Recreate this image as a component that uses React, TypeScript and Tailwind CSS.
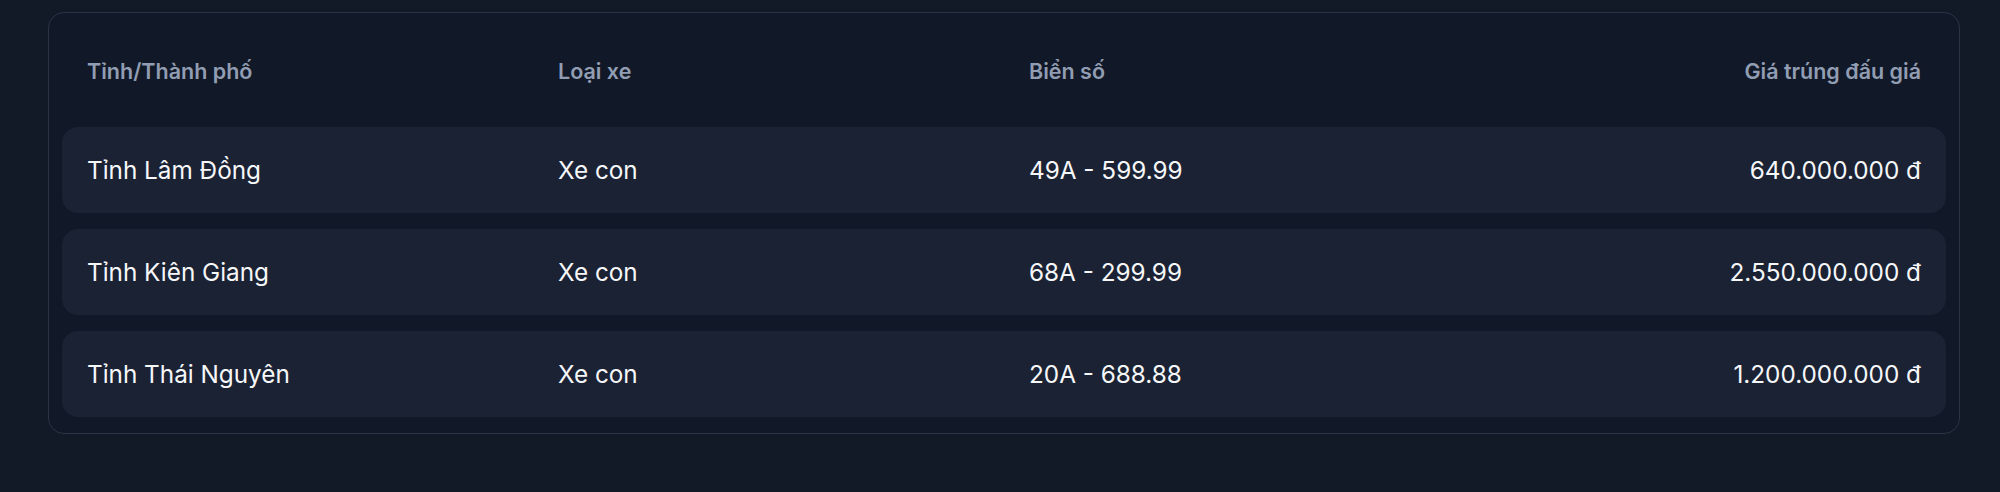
import React from "react";

interface IAuctionRow {
  province: string;
  vehicleType: string;
  plate: string;
  price: string;
}

const ROWS: IAuctionRow[] = [
  {province: "Tỉnh Lâm Đồng", vehicleType: "Xe con", plate: "49A - 599.99", price: "640.000.000 đ"},
  {province: "Tỉnh Kiên Giang", vehicleType: "Xe con", plate: "68A - 299.99", price: "2.550.000.000 đ"},
  {province: "Tỉnh Thái Nguyên", vehicleType: "Xe con", plate: "20A - 688.88", price: "1.200.000.000 đ"},
];

const HEADERS = ["Tỉnh/Thành phố", "Loại xe", "Biển số", "Giá trúng đấu giá"];

function App() {
  return (
    <div className="min-h-[492px] bg-[#121a28] pt-3 pl-12 pr-10 font-['Inter','Noto_Sans',sans-serif]">
      <div className="rounded-2xl border border-[#2a3446] bg-[#111827] px-[13px] pt-3 pb-4">
        <div className="grid h-[92px] grid-cols-4 items-center">
          {HEADERS.map((header, index) => (
            <div
              key={header}
              className={`px-[25px] text-[21.5px] font-semibold text-[#919db2] ${index === 3 ? "text-right" : ""}`}
            >
              {header}
            </div>
          ))}
        </div>

        <div className="mt-[10px] flex flex-col gap-4">
          {ROWS.map((row) => (
            <div key={row.plate} className="grid h-[86px] grid-cols-4 items-center rounded-2xl bg-[#1b2233] text-[24.3px] text-[#f6f7f9]">
              <div className="px-[25px]">{row.province}</div>
              <div className="px-[25px]">{row.vehicleType}</div>
              <div className="px-[25px]">{row.plate}</div>
              <div className="px-[25px] text-right">{row.price}</div>
            </div>
          ))}
        </div>
      </div>
    </div>
  );
}

export default App;
